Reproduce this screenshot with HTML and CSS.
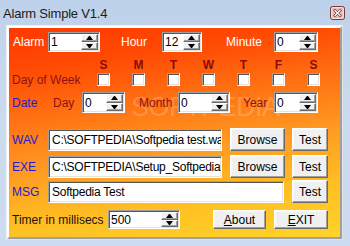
FILE: index.html
```html
<!DOCTYPE html>
<html>
<head>
<meta charset="utf-8">
<link rel="stylesheet" href="styles.css">
</head>
<body>
<div class="window">
  <div class="titlebar">
    <span class="title">Alarm Simple V1.4</span>
    <span class="close">
      <svg width="15" height="14" viewBox="0 0 15 14">
        <rect x="0.5" y="0.5" width="14" height="13" rx="2" fill="#c98f8a" stroke="#7a3a38"/>
        <rect x="1.5" y="1.5" width="12" height="11" rx="1" fill="#e7c2bd" stroke="#f4dcd8"/>
        <path d="M5 4.5 L10 9.5 M10 4.5 L5 9.5" stroke="#6a2a28" stroke-width="2.6" stroke-linecap="square"/>
        <path d="M5 4.5 L10 9.5 M10 4.5 L5 9.5" stroke="#ffffff" stroke-width="1.3" stroke-linecap="square"/>
      </svg>
    </span>
  </div>
  <div class="frame">
    <div class="panel">
      <div class="watermark">SOFTPEDIA<span class="reg">®</span></div>
      <div class="watermark-small">www.softpedia.com</div>

      <div class="row r1">
        <span class="lbl white w35">Alarm</span>
        <div class="spin w52"><span class="val">1</span><span class="arrows"><span class="ab up"></span><span class="ab dn"></span></span></div>
        <span class="lbl white w41 ml21">Hour</span>
        <div class="spin w40"><span class="val">12</span><span class="arrows"><span class="ab up"></span><span class="ab dn"></span></span></div>
        <span class="lbl white w48 ml24">Minute</span>
        <div class="spin w44"><span class="val">0</span><span class="arrows"><span class="ab up"></span><span class="ab dn"></span></span></div>
      </div>

      <div class="days">
        <span>S</span><span>M</span><span>T</span><span>W</span><span>T</span><span>F</span><span>S</span>
      </div>

      <div class="row r-week">
        <span class="lbl maroon w85">Day of Week</span>
        <div class="checks">
          <span class="cb"></span><span class="cb"></span><span class="cb"></span><span class="cb"></span><span class="cb"></span><span class="cb"></span><span class="cb"></span>
        </div>
      </div>

      <div class="row r-date">
        <span class="lbl blue w41">Date</span>
        <span class="lbl maroon w29">Day</span>
        <div class="spin w43"><span class="val">0</span><span class="arrows"><span class="ab up"></span><span class="ab dn"></span></span></div>
        <span class="lbl maroon w39 ml14">Month</span>
        <div class="spin w52"><span class="val">0</span><span class="arrows"><span class="ab up"></span><span class="ab dn"></span></span></div>
        <span class="lbl maroon w31 ml13">Year</span>
        <div class="spin w44"><span class="val">0</span><span class="arrows"><span class="ab up"></span><span class="ab dn"></span></span></div>
      </div>

      <div class="row r-wav">
        <span class="lbl blue w36">WAV</span>
        <div class="field w174">C:\SOFTPEDIA\Softpedia test.wav</div>
        <button class="btn w55 ml8">Browse</button>
        <button class="btn w36 ml7">Test</button>
      </div>

      <div class="row r-exe">
        <span class="lbl blue w36">EXE</span>
        <div class="field w174">C:\SOFTPEDIA\Setup_Softpedia.exe</div>
        <button class="btn w55 ml8">Browse</button>
        <button class="btn w36 ml7">Test</button>
      </div>

      <div class="row r-msg">
        <span class="lbl blue w36">MSG</span>
        <div class="field w236">Softpedia Test</div>
        <button class="btn w36 ml8">Test</button>
      </div>

      <div class="row r-timer">
        <span class="lbl dark w96">Timer in millisecs</span>
        <div class="spin w72"><span class="val">500</span><span class="arrows"><span class="ab up"></span><span class="ab dn"></span></span></div>
        <button class="btn w53 ml33"><u>A</u>bout</button>
        <button class="btn w54 ml8"><u>E</u>XIT</button>
      </div>
    </div>
  </div>
</div>
</body>
</html>
```

FILE: styles.css
```css
html, body {
  margin: 0;
  padding: 0;
}
body {
  width: 350px;
  height: 246px;
  overflow: hidden;
  background: #c8d9ee;
  font-family: "Liberation Sans", Arial, sans-serif;
  font-size: 12px;
}
.window {
  width: 350px;
  height: 246px;
  background: linear-gradient(180deg, #bed1ea 0%, #c9daef 40%, #cddcf0 100%);
  box-sizing: border-box;
}
.titlebar {
  height: 25px;
  display: flex;
  align-items: center;
  justify-content: space-between;
  padding: 0 5px 0 3px;
}
.title {
  font-size: 13px;
  color: #1b1b1b;
  letter-spacing: -0.2px;
  margin-top: 1px;
}
.close {
  display: flex;
}
.close svg { display: block; }

.frame {
  margin-left: 6px;
  width: 337px;
  height: 215px;
  box-sizing: border-box;
  border: 1px solid;
  border-color: #f2f2f2 #e3e3e3 #e3e3e3 #f2f2f2;
}
.panel {
  position: relative;
  height: 100%;
  box-sizing: border-box;
  border: 2px solid;
  border-color: #ffffff #a0a0a0 #a0a0a0 #ffffff;
  background: linear-gradient(172deg, #ff3800 0%, #ff4c04 18%, #ff7414 38%, #ff9c22 58%, #ffbe22 78%, #ffd428 100%);
  padding-top: 4px;
  overflow: hidden;
}

.watermark {
  position: absolute;
  left: 122px;
  top: 64px;
  font-family: "Liberation Sans", Arial, sans-serif;
  font-size: 27px;
  letter-spacing: -0.5px;
  color: rgba(255, 255, 255, 0.2);
  white-space: nowrap;
  pointer-events: none;
}
.watermark .reg {
  font-size: 9px;
  vertical-align: top;
}
.watermark-small {
  position: absolute;
  left: 152px;
  top: 100px;
  font-size: 7px;
  color: rgba(255, 255, 255, 0.2);
  pointer-events: none;
}

.row {
  display: flex;
  align-items: center;
  padding-left: 3px;
  position: relative;
}
.r1 { height: 20px; padding-left: 4px; }
.r-week { height: 13px; margin-top: 1px; }
.r-date { height: 21px; margin-top: 6px; }
.r-wav { height: 23px; margin-top: 15px; }
.r-exe { height: 23px; margin-top: 4px; }
.r-msg { height: 23px; margin-top: 2px; }
.r-timer { height: 19px; margin-top: 7px; }

.lbl {
  flex: none;
  white-space: nowrap;
  line-height: 14px;
}
.white { color: #ffffff; }
.maroon { color: #8a1414; }
.blue { color: #1c1cd8; }
.dark { color: #1a120c; }

.spin {
  flex: none;
  display: flex;
  height: 100%;
  box-sizing: border-box;
  background: #ffffff;
  border: 1px solid;
  border-color: #a0a0a0 #ffffff #ffffff #a0a0a0;
  box-shadow: inset 1px 1px 0 #555555, inset -1px -1px 0 #e3e3e3;
  padding: 1px;
}
.spin .val {
  flex: 1;
  padding-left: 1px;
  display: flex;
  align-items: center;
  color: #000;
  font-size: 12px;
}
.arrows {
  flex: none;
  width: 17px;
  display: flex;
  flex-direction: column;
}
.ab {
  flex: 1;
  box-sizing: border-box;
  background: #f0f0f0;
  border: 1px solid;
  border-color: #ffffff #6a6a6a #6a6a6a #ffffff;
  box-shadow: inset -1px -1px 0 #a0a0a0;
  display: flex;
  align-items: center;
  justify-content: center;
}
.ab::after {
  content: "";
  width: 1px;
  height: 0;
  border-left: 3px solid transparent;
  border-right: 3px solid transparent;
}
.up::after { border-bottom: 4px solid #000; }
.dn::after { border-top: 4px solid #000; }

.days {
  display: grid;
  grid-template-columns: repeat(7, 13px);
  column-gap: 22px;
  margin-left: 88px;
  margin-top: 6px;
  height: 14px;
  line-height: 14px;
  font-weight: bold;
  color: #8a0c0c;
}
.days span {
  width: 13px;
  display: flex;
  justify-content: center;
}

.checks {
  display: grid;
  grid-template-columns: repeat(7, 13px);
  column-gap: 22px;
}
.cb {
  width: 13px;
  height: 13px;
  box-sizing: border-box;
  background: #fff;
  border: 1px solid;
  border-color: #a0a0a0 #ffffff #ffffff #a0a0a0;
  box-shadow: inset 1px 1px 0 #555555, inset -1px -1px 0 #e3e3e3;
}

.field {
  flex: none;
  height: 22px;
  box-sizing: border-box;
  background: #ffffff;
  border: 1px solid;
  border-color: #a0a0a0 #ffffff #ffffff #a0a0a0;
  box-shadow: inset 1px 1px 0 #555555, inset -1px -1px 0 #e3e3e3;
  padding: 0 2px 0 3px;
  line-height: 20px;
  white-space: nowrap;
  overflow: hidden;
  color: #000;
  font-size: 12px;
  letter-spacing: -0.25px;
}

.btn {
  flex: none;
  height: 100%;
  box-sizing: border-box;
  margin-top: 0;
  margin-bottom: 0;
  padding: 0;
  background: #f0f0f0;
  border: 1px solid;
  border-color: #ffffff #6a6a6a #6a6a6a #ffffff;
  box-shadow: inset -1px -1px 0 #a0a0a0, inset 1px 1px 0 #f8f8f8;
  font-family: "Liberation Sans", Arial, sans-serif;
  font-size: 12px;
  color: #000;
  text-align: center;
}
.btn u { text-decoration: underline; }

/* sizes and offsets (after component rules so they take effect) */
.w29 { width: 29px; }
.w31 { width: 31px; }
.w35 { width: 35px; }
.w36 { width: 36px; }
.w39 { width: 39px; }
.w40 { width: 40px; }
.w41 { width: 41px; }
.w43 { width: 43px; }
.w44 { width: 44px; }
.w48 { width: 48px; }
.w52 { width: 52px; }
.w53 { width: 53px; }
.w54 { width: 54px; }
.w55 { width: 55px; }
.w72 { width: 72px; }
.w85 { width: 85px; }
.w96 { width: 96px; }
.w174 { width: 174px; }
.w236 { width: 236px; }
.ml7 { margin-left: 7px; }
.ml8 { margin-left: 8px; }
.ml13 { margin-left: 13px; }
.ml14 { margin-left: 14px; }
.ml21 { margin-left: 21px; }
.ml24 { margin-left: 24px; }
.ml33 { margin-left: 33px; }
```
